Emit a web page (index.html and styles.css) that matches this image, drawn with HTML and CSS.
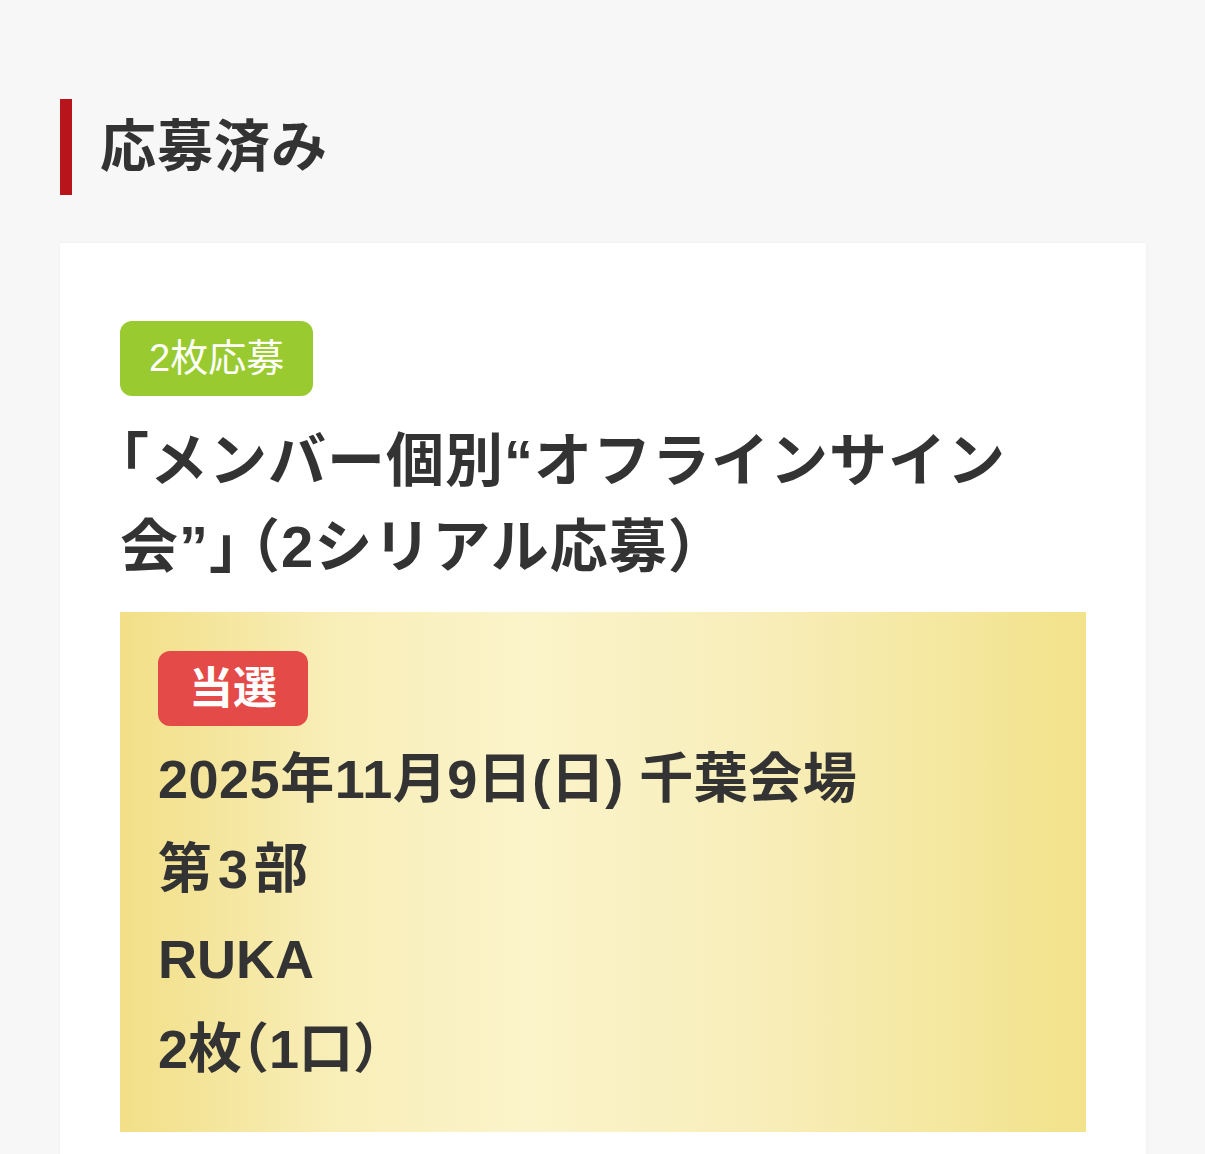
FILE: index.html
```html
<!DOCTYPE html>
<html lang="ja">
<head>
<meta charset="utf-8">
<title>応募済み</title>
<link rel="stylesheet" href="styles.css">
</head>
<body>
<div class="page">
  <h2 class="section-title">応募済み</h2>
  <div class="card">
    <span class="badge-count">2枚応募</span>
    <h3 class="event-title"><span class="halt">「</span>メンバー個別“オフラインサイン会”<span class="halt">」</span><span class="halt paren-open">（</span>2シリアル応募<span class="halt">）</span></h3>
    <div class="result">
      <span class="badge-win">当選</span>
      <p class="line date">2025年11月9日(日) 千葉会場</p>
      <p class="line part">第3部</p>
      <p class="line">RUKA</p>
      <p class="line">2枚<span class="halt">（</span>1口<span class="halt">）</span></p>
    </div>
  </div>
</div>
</body>
</html>
```

FILE: styles.css
```css
html, body {
  margin: 0;
  background: #f7f7f7;
}
body {
  font-family: "Liberation Sans", "Noto Sans CJK JP", sans-serif;
  color: #333333;
}
.page {
  padding: 99px 59px 0 60px;
}
.section-title {
  margin: 0;
  height: 96px;
  display: flex;
  align-items: center;
  border-left: 12px solid #b8141c;
  padding-left: 28px;
  font-size: 56px;
  font-weight: 700;
  line-height: 1;
  letter-spacing: 1px;
}
.card {
  margin-top: 48px;
  background: #ffffff;
  padding: 78px 60px 60px;
  display: flex;
  flex-direction: column;
  align-items: flex-start;
  box-shadow: 0 0 3px rgba(0, 0, 0, 0.05);
}
.badge-count {
  display: block;
  background: #99cb31;
  color: #ffffff;
  font-size: 38px;
  font-weight: 400;
  line-height: 75px;
  padding: 0 29px;
  border-radius: 12px;
}
.event-title {
  margin: 22px 0 0;
  font-size: 58px;
  line-height: 86px;
  font-weight: 700;
  letter-spacing: 1px;
}
.paren-open {
  padding-left: 12px;
}
.result {
  align-self: stretch;
  margin-top: 22px;
  padding: 39px 38px 38px;
  background: linear-gradient(90deg, #f2df87 0%, #f8eeb8 22%, #fbf4ca 42%, #f8eebb 65%, #f2e28b 100%);
  display: flex;
  flex-direction: column;
  align-items: flex-start;
}
.badge-win {
  display: block;
  background: #e44a47;
  color: #ffffff;
  font-size: 44px;
  font-weight: 700;
  line-height: 75px;
  padding: 0 31px;
  border-radius: 12px;
}
.line {
  margin: 0;
  font-size: 54px;
  font-weight: 700;
  line-height: 90px;
}
.line.date {
  margin-top: 8px;
  letter-spacing: 0.5px;
}
.line.part {
  letter-spacing: 6px;
}
.halt {
  font-feature-settings: "halt";
}
```
